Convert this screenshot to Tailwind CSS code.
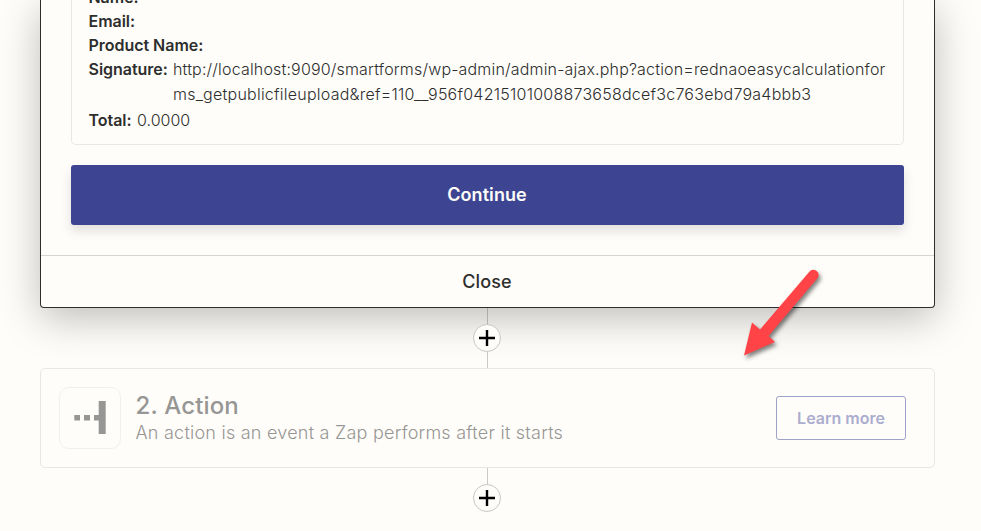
<!DOCTYPE html>
<html lang="en">
<head>
<meta charset="utf-8">
<title>Zap editor</title>
<script src="https://cdn.jsdelivr.net/npm/@tailwindcss/browser@4"></script>
</head>
<body class="relative h-[531px] w-[981px] overflow-hidden bg-[#fffdf9] font-['Inter',sans-serif] text-[#2d2e2e]">
<main class="ml-10 flex w-[895px] flex-col">
  <section class="h-[308px] rounded-b border border-t-0 border-[#2d2e2e] bg-[#fffdf9] shadow-[0_10px_40px_rgba(0,0,0,0.26)]">
    <div class="flex h-[255px] flex-col px-[30px]">
      <dl class="-mt-[15px] h-[160px] shrink-0 rounded-b-[5px] border border-t-0 border-[#e8e7e4] pl-[16.5px] pr-4 text-base leading-6">
        <div class="flex h-6"><dt class="font-semibold tracking-[-0.03px]">Name:</dt></div>
        <div class="flex h-6"><dt class="font-semibold tracking-[-0.03px]">Email:</dt></div>
        <div class="flex h-6"><dt class="font-semibold tracking-[-0.03px]">Product Name:</dt></div>
        <div class="flex h-[51px] gap-[5.5px]">
          <dt class="w-[79px] shrink-0 whitespace-nowrap font-semibold tracking-[-0.03px]">Signature:</dt>
          <dd class="whitespace-nowrap font-light leading-[25px]"><span class="tracking-[0.172px]">http://localhost:9090/smartforms/wp-admin/admin-ajax.php?action=rednaoeasycalculationfor</span><br><span class="tracking-[0.24px]">ms_getpublicfileupload&amp;ref=110__956f04215101008873658dcef3c763ebd79a4bbb3</span></dd>
        </div>
        <div class="flex h-6 gap-[5.5px]"><dt class="font-semibold tracking-[-0.03px]">Total:</dt><dd class="font-light">0.0000</dd></div>
      </dl>
      <button class="mt-5 h-[60px] shrink-0 rounded-[3px] bg-[#3d4592] pr-px text-lg font-semibold tracking-[0.08px] text-[#fffdf9] shadow-[0_6px_12px_rgba(0,0,0,0.12)]">Continue</button>
    </div>
    <button class="flex h-[52px] w-full items-center justify-center border-t border-[#d7d5d2] pr-px text-lg font-medium tracking-[0.12px]">Close</button>
  </section>

  <div class="flex h-[60px] flex-col items-center pr-px">
    <div class="ml-px h-4 w-px bg-black/20"></div>
    <svg class="size-7 shrink-0" viewBox="0 0 28 28"><circle cx="14" cy="14" r="13.5" fill="#fffdf9" stroke="#c7c6c3"/><path d="M14 6v16M6 14h16" stroke="#000" stroke-width="2.4"/></svg>
    <div class="ml-px h-4 w-px bg-black/20"></div>
  </div>

  <section class="flex h-[100px] items-center rounded-[5px] border border-[#e8e7e4] pl-[18px] pr-7">
    <div class="flex size-[62px] shrink-0 rounded-[10px] border border-[#f2f0ed]">
      <svg class="size-[60px]" viewBox="0 0 60 60" fill="#969694"><path d="M14.300 27h5.700v5.500h-5.700zM24 27h6v5.500h-6zM34 27h4.700V13h7v33h-7V32.500H34z"/></svg>
    </div>
    <div class="ml-[14.5px] flex-1 pt-0.5">
      <h2 class="text-2xl font-medium leading-7 tracking-[0.15px] text-[#969694]">2. Action</h2>
      <p class="text-lg font-light leading-[26px] tracking-[0.235px] text-[#969694]">An action is an event a Zap performs after it starts</p>
    </div>
    <button class="h-[44px] w-[130px] rounded-[3px] border border-[#9ea2c8] text-base font-semibold text-[#abadce]">Learn more</button>
  </section>

  <div class="flex h-[60px] flex-col items-center pr-px">
    <div class="ml-px h-4 w-px bg-black/20"></div>
    <svg class="size-7 shrink-0" viewBox="0 0 28 28"><circle cx="14" cy="14" r="13.5" fill="#fffdf9" stroke="#c7c6c3"/><path d="M14 6v16M6 14h16" stroke="#000" stroke-width="2.4"/></svg>
  </div>
</main>
<svg class="absolute left-[734px] top-[260px] h-[110px] w-[100px] drop-shadow-[2px_3px_2px_rgba(0,0,0,0.5)]" viewBox="0 0 100 110" fill="#ff4346"><path d="M10 95.500 18 62.500 26 69.500 76 11A5.300 5.300 0 0 1 84 17.500L34.500 76 41 82Z"/></svg>
</body>
</html>
